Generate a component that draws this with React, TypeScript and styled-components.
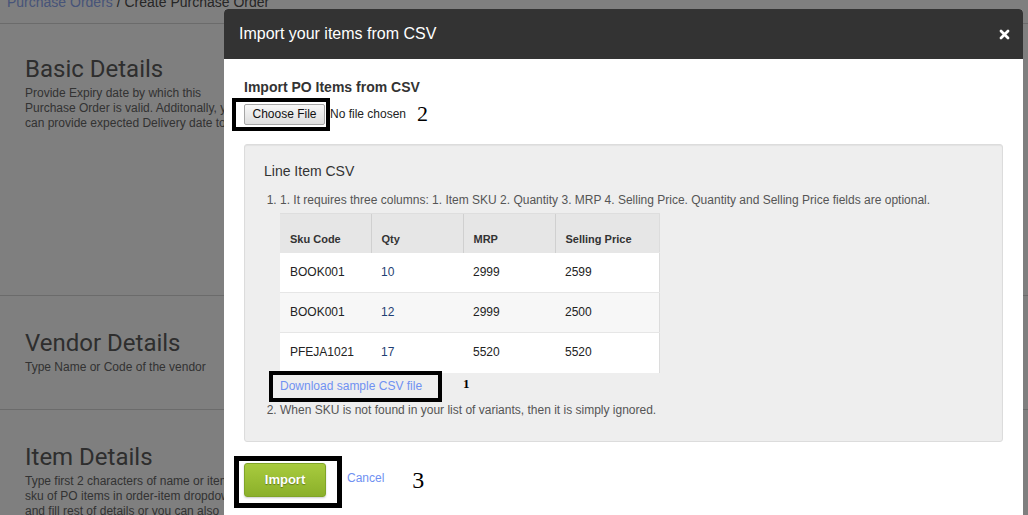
import styled, { createGlobalStyle } from "styled-components";

const GlobalStyle = createGlobalStyle`
  * { box-sizing: border-box; }
  html, body { margin: 0; padding: 0; background: #fff; }
  body {
    font-family: "Liberation Sans", Arial, sans-serif;
    font-size: 12px;
    color: #333;
    overflow: hidden;
  }
`;

const Page = styled.div`
  margin-top: -8px;
  width: 1028px;
`;

const Crumbs = styled.div`
  font-size: 14px;
  line-height: 20px;
  padding: 0 0 11px 7px;
  border-bottom: 1px solid #d6d6d6;
  color: #4c4c4c;
  a {
    color: #8ea8f2;
    text-decoration: none;
  }
`;

const Section = styled.section<{ $minHeight?: number; $top?: number }>`
  min-height: ${(p) => p.$minHeight ?? 0}px;
  padding: ${(p) => p.$top ?? 33}px 25px 34px;
  border-bottom: 1px solid #d6d6d6;
`;

const SectionTitle = styled.h2`
  margin: 0;
  font-family: Roboto, "Liberation Sans", sans-serif;
  font-size: 24px;
  font-weight: 400;
  line-height: 28px;
  color: #5c5c5c;
`;

const SectionText = styled.p`
  margin: 3px 0 0;
  width: 222px;
  font-size: 12px;
  line-height: 15px;
  color: #666;
`;

const Overlay = styled.div`
  position: fixed;
  inset: 0;
  background: rgba(0, 0, 0, 0.5);
`;

const Modal = styled.div`
  position: fixed;
  top: 9px;
  left: 224px;
  width: 799px;
  height: 540px;
  background: #fff;
  border-radius: 4px 4px 0 0;
`;

const ModalHeader = styled.div`
  display: flex;
  align-items: center;
  justify-content: space-between;
  height: 50px;
  padding: 0 13px 0 15px;
  background: #333;
  color: #fff;
  border-radius: 4px 4px 0 0;
`;

const ModalTitle = styled.h3`
  margin: 0;
  font-size: 16px;
  font-weight: 400;
  line-height: 20px;
`;

const CloseButton = styled.button`
  display: flex;
  padding: 0;
  border: 0;
  background: none;
  cursor: pointer;
`;

const ModalBody = styled.div`
  padding: 18px 20px 0;
`;

const FieldLabel = styled.div`
  font-size: 14px;
  font-weight: 700;
  line-height: 20px;
  color: #333;
`;

const FileRow = styled.div`
  display: flex;
  align-items: center;
  margin-top: 6px;
`;

const Marked = styled.span`
  position: relative;
  display: inline-flex;
`;

const Frame = styled.span<{ $t: number; $l: number; $r: number; $b: number; $w: number }>`
  position: absolute;
  top: ${(p) => -p.$t}px;
  left: ${(p) => -p.$l}px;
  right: ${(p) => -p.$r}px;
  bottom: ${(p) => -p.$b}px;
  border: ${(p) => p.$w}px solid #000;
  pointer-events: none;
`;

const ChooseButton = styled.button`
  width: 81px;
  height: 21px;
  padding: 0;
  font-family: "Liberation Sans", Arial, sans-serif;
  font-size: 12px;
  color: #111;
  background: linear-gradient(#f8f8f8, #dddddd);
  border: 1px solid #a6a6a6;
  border-radius: 2px;
`;

const NoFile = styled.span`
  margin-left: 5px;
  font-size: 12px;
  color: #222;
`;

const Num = styled.span<{ $size: number; $gap: number; $bold?: boolean; $shift?: number }>`
  margin-left: ${(p) => p.$gap}px;
  margin-top: ${(p) => p.$shift ?? 0}px;
  font-family: "Liberation Serif", "Times New Roman", serif;
  font-size: ${(p) => p.$size}px;
  font-weight: ${(p) => (p.$bold ? 700 : 400)};
  line-height: 1;
  color: #000;
`;

const Well = styled.div`
  margin-top: 19px;
  padding: 17px 20px 23px 19px;
  background: #eeeeee;
  border: 1px solid #dcdcdc;
  border-radius: 3px;
  box-shadow: inset 0 1px 1px rgba(0, 0, 0, 0.05);
`;

const WellTitle = styled.div`
  font-size: 14px;
  line-height: 18px;
  color: #333;
`;

const Steps = styled.ol`
  margin: 12px 0 0;
  padding-left: 16px;
  color: #555;
  font-size: 12px;
  line-height: 16px;
  li + li {
    margin-top: 7px;
  }
`;

const Table = styled.table`
  width: 379px;
  margin-top: 5px;
  border-collapse: collapse;
  background: #fff;
  border-right: 1px solid #dcdcdc;
  table-layout: fixed;
`;

const HeadCell = styled.th<{ $width: number }>`
  width: ${(p) => p.$width}px;
  height: 39px;
  padding: 0 10px 6px;
  vertical-align: bottom;
  text-align: left;
  font-size: 11px;
  font-weight: 700;
  line-height: 14px;
  color: #333;
  background: #e6e6e6;
  border-top: 1px solid #dedede;
  & + & {
    border-left: 1px solid #d0d0d0;
  }
`;

const Row = styled.tr`
  &:nth-child(even) {
    background: #f7f7f7;
  }
`;

const Cell = styled.td<{ $qty?: boolean }>`
  height: 40px;
  padding: 0 10px 2px;
  border-top: 1px solid #e6e6e6;
  font-size: 12px;
  color: ${(p) => (p.$qty ? "#1f3f73" : "#222")};
`;

const LinkRow = styled.div`
  display: flex;
  align-items: center;
  margin-top: 4px;
  line-height: 18px;
`;

const Link = styled.a`
  font-size: 12px;
  color: #7091f2;
  text-decoration: none;
`;

const Footer = styled.div`
  display: flex;
  align-items: center;
  margin-top: 21px;
`;

const ImportButton = styled.button`
  width: 82px;
  height: 34px;
  padding: 0;
  font-family: "Liberation Sans", Arial, sans-serif;
  font-size: 13px;
  font-weight: 700;
  color: #fff;
  text-shadow: 0 1px 1px rgba(0, 0, 0, 0.35);
  background: linear-gradient(#a8cb3e, #8bb02a);
  border: 1px solid #80a527;
  border-radius: 3px;
  box-shadow: 0 1px 2px rgba(0, 0, 0, 0.2);
`;

const CancelLink = styled(Link)`
  margin-left: 21px;
  margin-top: -3px;
`;

const rows = [
  { sku: "BOOK001", qty: "10", mrp: "2999", price: "2599" },
  { sku: "BOOK001", qty: "12", mrp: "2999", price: "2500" },
  { sku: "PFEJA1021", qty: "17", mrp: "5520", price: "5520" },
];

function CloseIcon() {
  return (
    <svg width="11" height="11" viewBox="0 0 11 11">
      <path d="M2 2 L9 9 M9 2 L2 9" stroke="#fff" strokeWidth="2.8" strokeLinecap="round" />
    </svg>
  );
}

export default function App() {
  return (
    <>
      <GlobalStyle />
      <Page>
        <Crumbs>
          <a href="#">Purchase Orders</a> / Create Purchase Order
        </Crumbs>
        <Section $minHeight={272} $top={31}>
          <SectionTitle>Basic Details</SectionTitle>
          <SectionText>
            Provide Expiry date by which this Purchase Order is valid. Additonally, you can provide
            expected Delivery date too.
          </SectionText>
        </Section>
        <Section>
          <SectionTitle>Vendor Details</SectionTitle>
          <SectionText>Type Name or Code of the vendor</SectionText>
        </Section>
        <Section>
          <SectionTitle>Item Details</SectionTitle>
          <SectionText>
            Type first 2 characters of name or item sku of PO items in order-item dropdown and fill
            rest of details or you can also import items.
          </SectionText>
        </Section>
      </Page>

      <Overlay />
      <Modal>
        <ModalHeader>
          <ModalTitle>Import your items from CSV</ModalTitle>
          <CloseButton>
            <CloseIcon />
          </CloseButton>
        </ModalHeader>
        <ModalBody>
          <FieldLabel>Import PO Items from CSV</FieldLabel>
          <FileRow>
            <Marked>
              <ChooseButton>Choose File</ChooseButton>
              <Frame $t={6} $l={12} $r={5} $b={6} $w={4} />
            </Marked>
            <NoFile>No file chosen</NoFile>
            <Num $size={22} $gap={11}>2</Num>
          </FileRow>

          <Well>
            <WellTitle>Line Item CSV</WellTitle>
            <Steps>
              <li>
                1. It requires three columns: 1. Item SKU 2. Quantity 3. MRP 4. Selling Price.
                Quantity and Selling Price fields are optional.
                <Table>
                  <thead>
                    <tr>
                      <HeadCell $width={91}>Sku Code</HeadCell>
                      <HeadCell $width={92}>Qty</HeadCell>
                      <HeadCell $width={92}>MRP</HeadCell>
                      <HeadCell $width={104}>Selling Price</HeadCell>
                    </tr>
                  </thead>
                  <tbody>
                    {rows.map((r, i) => (
                      <Row key={i}>
                        <Cell>{r.sku}</Cell>
                        <Cell $qty>{r.qty}</Cell>
                        <Cell>{r.mrp}</Cell>
                        <Cell>{r.price}</Cell>
                      </Row>
                    ))}
                  </tbody>
                </Table>
                <LinkRow>
                  <Marked>
                    <Link href="#">Download sample CSV file</Link>
                    <Frame $t={6} $l={11} $r={20} $b={7} $w={4} />
                  </Marked>
                  <Num $size={13} $gap={41} $bold $shift={-4}>1</Num>
                </LinkRow>
              </li>
              <li>When SKU is not found in your list of variants, then it is simply ignored.</li>
            </Steps>
          </Well>

          <Footer>
            <Marked>
              <ImportButton>Import</ImportButton>
              <Frame $t={7} $l={10} $r={16} $b={11} $w={5} />
            </Marked>
            <CancelLink href="#">Cancel</CancelLink>
            <Num $size={24} $gap={28}>3</Num>
          </Footer>
        </ModalBody>
      </Modal>
    </>
  );
}
